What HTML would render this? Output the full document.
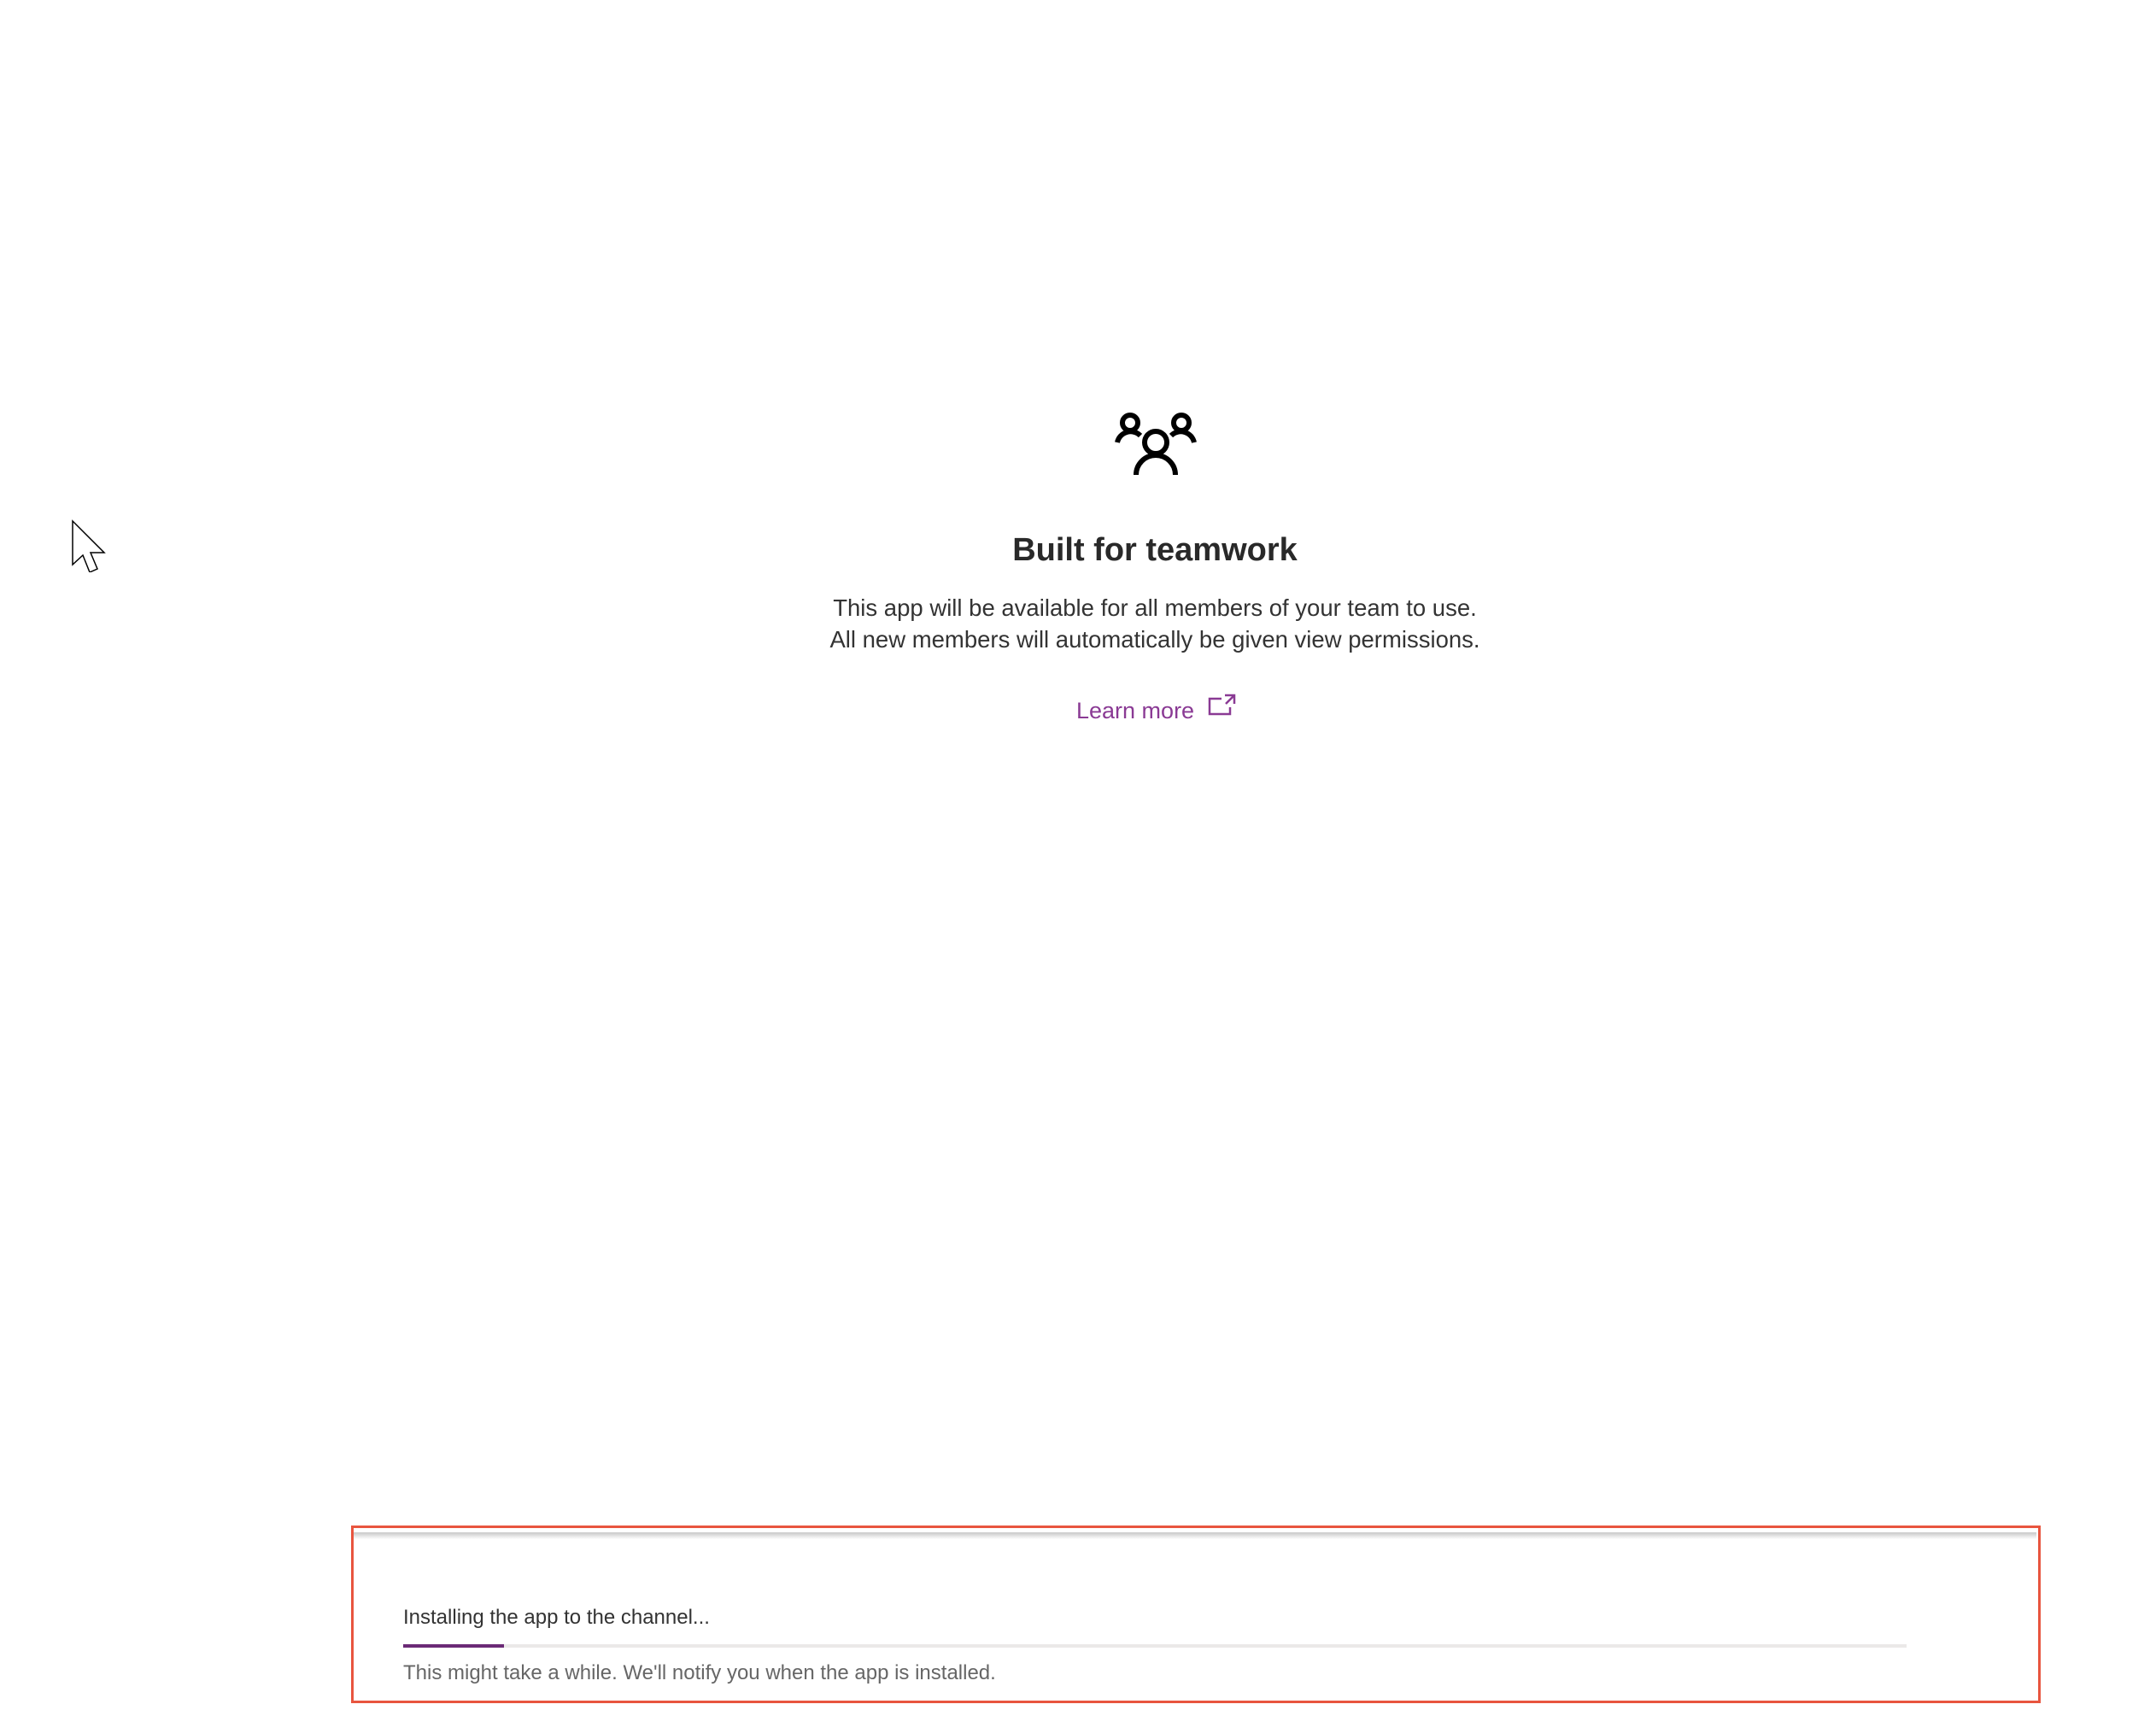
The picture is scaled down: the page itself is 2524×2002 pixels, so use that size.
<!DOCTYPE html>
<html><head><meta charset="utf-8"><style>
html,body{margin:0;padding:0;background:#fff;width:2524px;height:2002px;overflow:hidden;font-family:"Segoe UI","Liberation Sans",sans-serif;}
.c{position:absolute;left:0;width:2704px;text-align:center;color:#333;}
</style></head><body>
<svg style="position:absolute;left:1305px;top:480px" width="100" height="78" viewBox="0 0 100 78">
<g fill="none" stroke="#000" stroke-width="6">
<circle cx="18" cy="15" r="9"/><circle cx="78" cy="15" r="9"/><circle cx="48" cy="38" r="13"/>
<path d="M3 38 A16 16 0 0 1 30 30"/><path d="M93 38 A16 16 0 0 0 66 30"/>
<path d="M25 76 A23 23 0 0 1 71 76"/>
</g></svg>
<div class="c" style="top:623px;font-size:38px;font-weight:bold;color:#292929">Built for teamwork</div>
<div class="c" style="top:693px;font-size:27.5px;line-height:37px;color:#333">This app will be available for all members of your team to use.<br>All new members will automatically be given view permissions.</div>
<div style="position:absolute;left:1260px;top:817px;font-size:27px;color:#8a3a94">Learn more</div>
<svg style="position:absolute;left:1414px;top:812px" width="34" height="30" viewBox="0 0 34 30"><g fill="none" stroke="#8a3a94" stroke-width="2.5"><path d="M16 6 H2 V24 H26 V16"/><path d="M20 2 H31 V12 M31 2 L21 12"/></g></svg>
<svg style="position:absolute;left:82px;top:608px" width="45" height="62" viewBox="0 0 45 62"><path d="M3 2 L3 53 L15 42 L23 62 L32 58 L24 39 L40 39 Z" fill="#fff" stroke="#000" stroke-width="1.5"/></svg>
<div style="position:absolute;left:414px;top:1794px;width:1970px;height:8px;background:linear-gradient(#c8c8c8,#fff)"></div>
<div style="position:absolute;left:411px;top:1786px;width:1972px;height:202px;border:3px solid #e8553f;"></div>
<div style="position:absolute;left:472px;top:1880px;font-size:24px;color:#333">Installing the app to the channel...</div>
<div style="position:absolute;left:472px;top:1925px;width:1760px;height:4px;background:#ebe9e8"></div>
<div style="position:absolute;left:472px;top:1925px;width:118px;height:4px;background:#6b2a76"></div>
<div style="position:absolute;left:472px;top:1945px;font-size:24px;color:#666">This might take a while. We'll notify you when the app is installed.</div>
</body></html>
